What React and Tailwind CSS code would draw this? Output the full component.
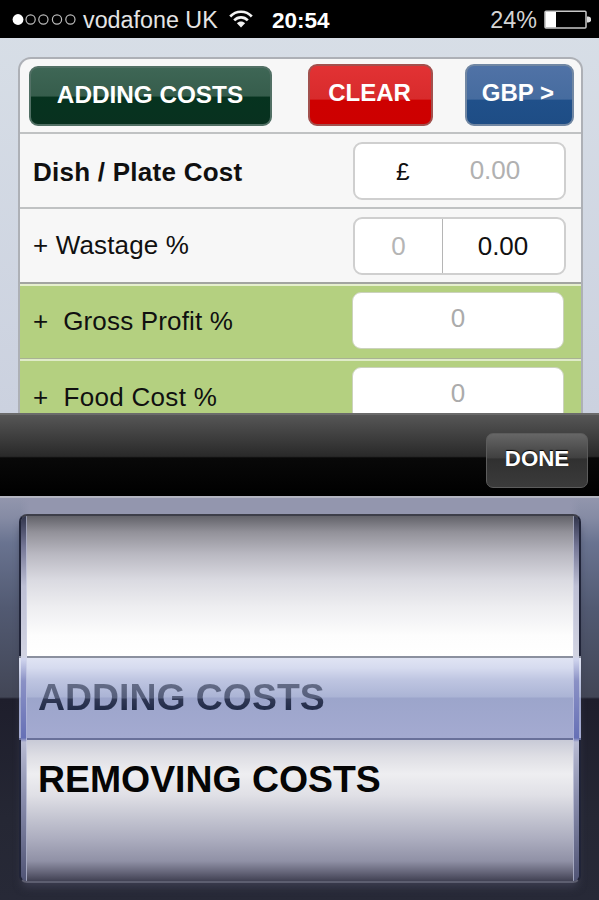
import React from "react";

function StatusBar() {
  return (
    <header className="flex h-[38px] items-center bg-black pl-3 text-[23.3px] leading-none text-[#e4e4e4]">
      <svg width="66" height="14" viewBox="0 0 66 14" fill="none" stroke="#bdbdbd" strokeWidth="1.2">
        <circle cx="6" cy="7.5" r="5.4" fill="#fff" stroke="none" />
        <circle cx="18.6" cy="7.5" r="4.6" />
        <circle cx="31.4" cy="7.5" r="4.6" />
        <circle cx="45" cy="7.5" r="4.6" />
        <circle cx="58.4" cy="7.5" r="4.6" />
      </svg>
      <span className="ml-[5px] w-[134px] whitespace-nowrap pt-[4px]">vodafone UK</span>
      <svg className="ml-[12px]" width="24" height="20" viewBox="0 0 24 20" fill="none" stroke="#f2f2f2" strokeWidth="2.6">
        <path d="M1.2 7.5C7 1.2 17 1.2 22.8 7.5" />
        <path d="M5.2 11.4C9 7.4 15 7.4 18.8 11.4" />
        <path d="M12 18.6L7.9 14.3C10.2 12 13.8 12 16.1 14.3Z" fill="#f2f2f2" stroke="none" />
      </svg>
      <span className="ml-[19px] pt-[4px] text-[22.5px] font-bold text-white">20:54</span>
      <span className="ml-auto pt-[4px] text-[23.3px] text-[#d4d4d4]">24%</span>
      <svg className="ml-[7px] mr-[8px]" width="47" height="20" viewBox="0 0 47 20" fill="none">
        <rect x="1" y="2.3" width="41" height="16.6" rx="1" stroke="#c9c9c9" strokeWidth="1.5" />
        <rect x="1.5" y="3" width="10.5" height="15.4" fill="#fff" />
        <path d="M43 7.5h1.2a2.8 2.8 0 0 1 0 6H43Z" fill="#ddd" />
      </svg>
    </header>
  );
}

function CostPanel() {
  return (
    <section className="ml-[18px] mt-[19px] w-[565px] overflow-hidden rounded-t-[13px] border-2 border-b-0 border-[#adb0b6] bg-[#f7f7f7] text-[26px] leading-none text-[#101010]">
      <div className="flex h-[75px] items-start border-b-2 border-[#c0c2c3] pl-[9px] pt-[5px] text-[24px] font-bold text-white [text-shadow:0_-1px_1px_rgba(0,0,0,0.5)]">
        <button className="mt-[2px] flex h-[60px] w-[243px] items-center justify-center rounded-[9px] border-2 border-[#527065] bg-[linear-gradient(#3e6655_0%,#365d4c_50%,#06331f_52%,#08311f_100%)] pb-[2px] pr-px text-[24.3px] font-bold">ADDING COSTS</button>
        <button className="ml-[36px] flex h-[62px] w-[125px] items-center justify-center rounded-[9px] border-2 border-[#a2514e] bg-[linear-gradient(#e23234_0%,#d82b2c_57%,#ce0000_59%,#cd0000_100%)] pb-[5px] pr-[2px] font-bold">CLEAR</button>
        <button className="ml-[32px] flex h-[62px] w-[109px] items-center justify-center rounded-[9px] border-2 border-[#7187a3] bg-[linear-gradient(#5072a6_0%,#466c9f_57%,#20508a_59%,#1e4d85_100%)] pb-[5px] pr-[3px] font-bold">GBP &gt;</button>
      </div>
      <div className="flex h-[75px] items-center border-b-2 border-[#c0c2c3] pl-[13px] pr-[15px]">
        <span className="whitespace-pre pt-[2px] font-bold tracking-[0.25px]">Dish / Plate Cost</span>
        <div className="ml-auto flex h-[58px] w-[213px] items-center rounded-[9px] border-2 border-[#cfcfcf] bg-white">
          <span className="ml-[41px] pt-[4px] text-[24.5px]">£</span>
          <span className="ml-[60px] pb-px text-[#b1b1b1]">0.00</span>
        </div>
      </div>
      <div className="flex h-[75px] items-center border-b-2 border-[#a2a5a0] pl-[13px] pr-[15px]">
        <span className="whitespace-pre pb-px tracking-[0.15px]">+ Wastage %</span>
        <div className="ml-auto flex h-[58px] w-[213px] rounded-[9px] border-2 border-[#cfcfcf] bg-white">
          <span className="flex w-[88px] items-center justify-center border-r border-[#b5b5b5] pt-px text-[#b5b5b5]">0</span>
          <span className="flex flex-1 items-center justify-center pr-px pt-px">0.00</span>
        </div>
      </div>
      <div className="flex h-[75px] border-b border-t-2 border-b-[#a9b294] border-t-[#e5efcd] bg-[#b4d080] pl-[13px] pr-[17px]">
        <span className="whitespace-pre pt-[22px] tracking-[0.17px]">+  Gross Profit %</span>
        <div className="ml-auto mt-[6px] flex h-[57px] w-[212px] items-center justify-center rounded-[9px] border border-[#cbd2bd] bg-white pb-[5px] text-[#ababab]">0</div>
      </div>
      <div className="flex h-[75px] border-t-2 border-[#dfebc8] bg-[#b4d080] pl-[13px] pr-[17px]">
        <span className="whitespace-pre pt-[23px] tracking-[0.3px]">+  Food Cost %</span>
        <div className="ml-auto mt-[6px] flex h-[57px] w-[212px] items-center justify-center rounded-[9px] border border-[#cbd2bd] bg-white pb-[5px] text-[#ababab]">0</div>
      </div>
    </section>
  );
}

function Toolbar() {
  return (
    <div className="flex h-[83px] items-start justify-end border-t-2 border-[#6b6b6b] bg-[linear-gradient(#565656_0%,#292929_51%,#080808_53%,#000_100%)] pr-[11px] pt-[18px]">
      <button className="flex h-[55px] w-[102px] items-center justify-center rounded-[7px] border border-[#5c5c5c] bg-[linear-gradient(#666_0%,#404040_45%,#303030_47%,#3b3b3b_100%)] pb-[3px] text-[22.3px] font-bold leading-none text-white [text-shadow:0_-1px_1px_#000]">DONE</button>
    </div>
  );
}

function Picker() {
  return (
    <section className="h-[404px] border-t-2 border-[#b3b5c1] bg-[linear-gradient(#9296ad_0px,#858ba4_20px,#697390_45px,#525a72_110px,#424656_199px,#1e1e2c_201px,#252734_320px,#272937_100%)]">
      <div className="h-[402px] bg-[linear-gradient(90deg,transparent_20px,#9396ae_30px,#9396ae_570px,transparent_580px)] bg-[length:100%_18px] bg-no-repeat pl-[19px] pr-[18px] pt-[16px]">
        <div className="relative h-[369px] rounded-[8px] border-2 border-x-[#202438] border-b-[#5d5e70] border-t-[#3d3e49] bg-[linear-gradient(#626269_0px,#929199_16px,#b9b8c1_38px,#dadae1_64px,#ededf0_90px,#fdfdfd_120px,#fff_140px,#fff_222px,#c7c9d6_223px,#dedee4_240px,#eeeef1_258px,#e0e0e6_279px,#c5c6d2_301px,#acadbf_323px,#9091a6_345px,#66667a_356px,#414153_100%)] shadow-[0_7px_8px_-3px_#3c3d50]">
          <div className="h-[140px]" />
          <div className="-mx-[2px] flex h-[84px] items-center border-b-2 border-t-2 border-b-[#69709a] border-t-[#8b909f] bg-[linear-gradient(#e0e4f4_0px,#d6dbef_10px,#bec5e1_22px,#abb4d5_39px,#9ca5cb_40px,#a4aad1_100%)] pl-[19px] text-[37.4px] font-bold leading-none">
            <span className="bg-[linear-gradient(#68708a_0px,#555e7b_19px,#303855_20px,#182341_100%)] bg-clip-text pb-px text-transparent">ADDING COSTS</span>
          </div>
          <div className="flex h-[82px] items-center whitespace-nowrap pl-[17px] pb-[2px] text-[37.4px] font-bold leading-none text-[#050505]">REMOVING COSTS</div>
          <div className="pointer-events-none absolute inset-y-0 left-0 w-[6px] rounded-l-[6px] border-r border-[#d6d8eb]/60 bg-[linear-gradient(#30344b_0px,#737594_30px,#bdbfd4_70px,#d2d4e2_140px,#d0d5ee_143px,#8a91c5_165px,#6670b6_222px,#b8bbd2_226px,#8b8fae_280px,#505475_100%)]" />
          <div className="pointer-events-none absolute inset-y-0 right-0 w-[6px] rounded-r-[6px] border-l border-[#d6d8eb]/60 bg-[linear-gradient(#30344b_0px,#737594_30px,#bdbfd4_70px,#d2d4e2_140px,#d0d5ee_143px,#8a91c5_165px,#6670b6_222px,#b8bbd2_226px,#8b8fae_280px,#505475_100%)]" />
        </div>
      </div>
    </section>
  );
}

export default function App() {
  return (
    <main className="h-[900px] w-[599px] overflow-hidden bg-[#d0d6e2] font-['Liberation_Sans',Arial,sans-serif]">
      <div className="h-[413px] overflow-hidden bg-[linear-gradient(#d8dfe7,#cbd1df)]">
        <StatusBar />
        <CostPanel />
      </div>
      <Toolbar />
      <Picker />
    </main>
  );
}
